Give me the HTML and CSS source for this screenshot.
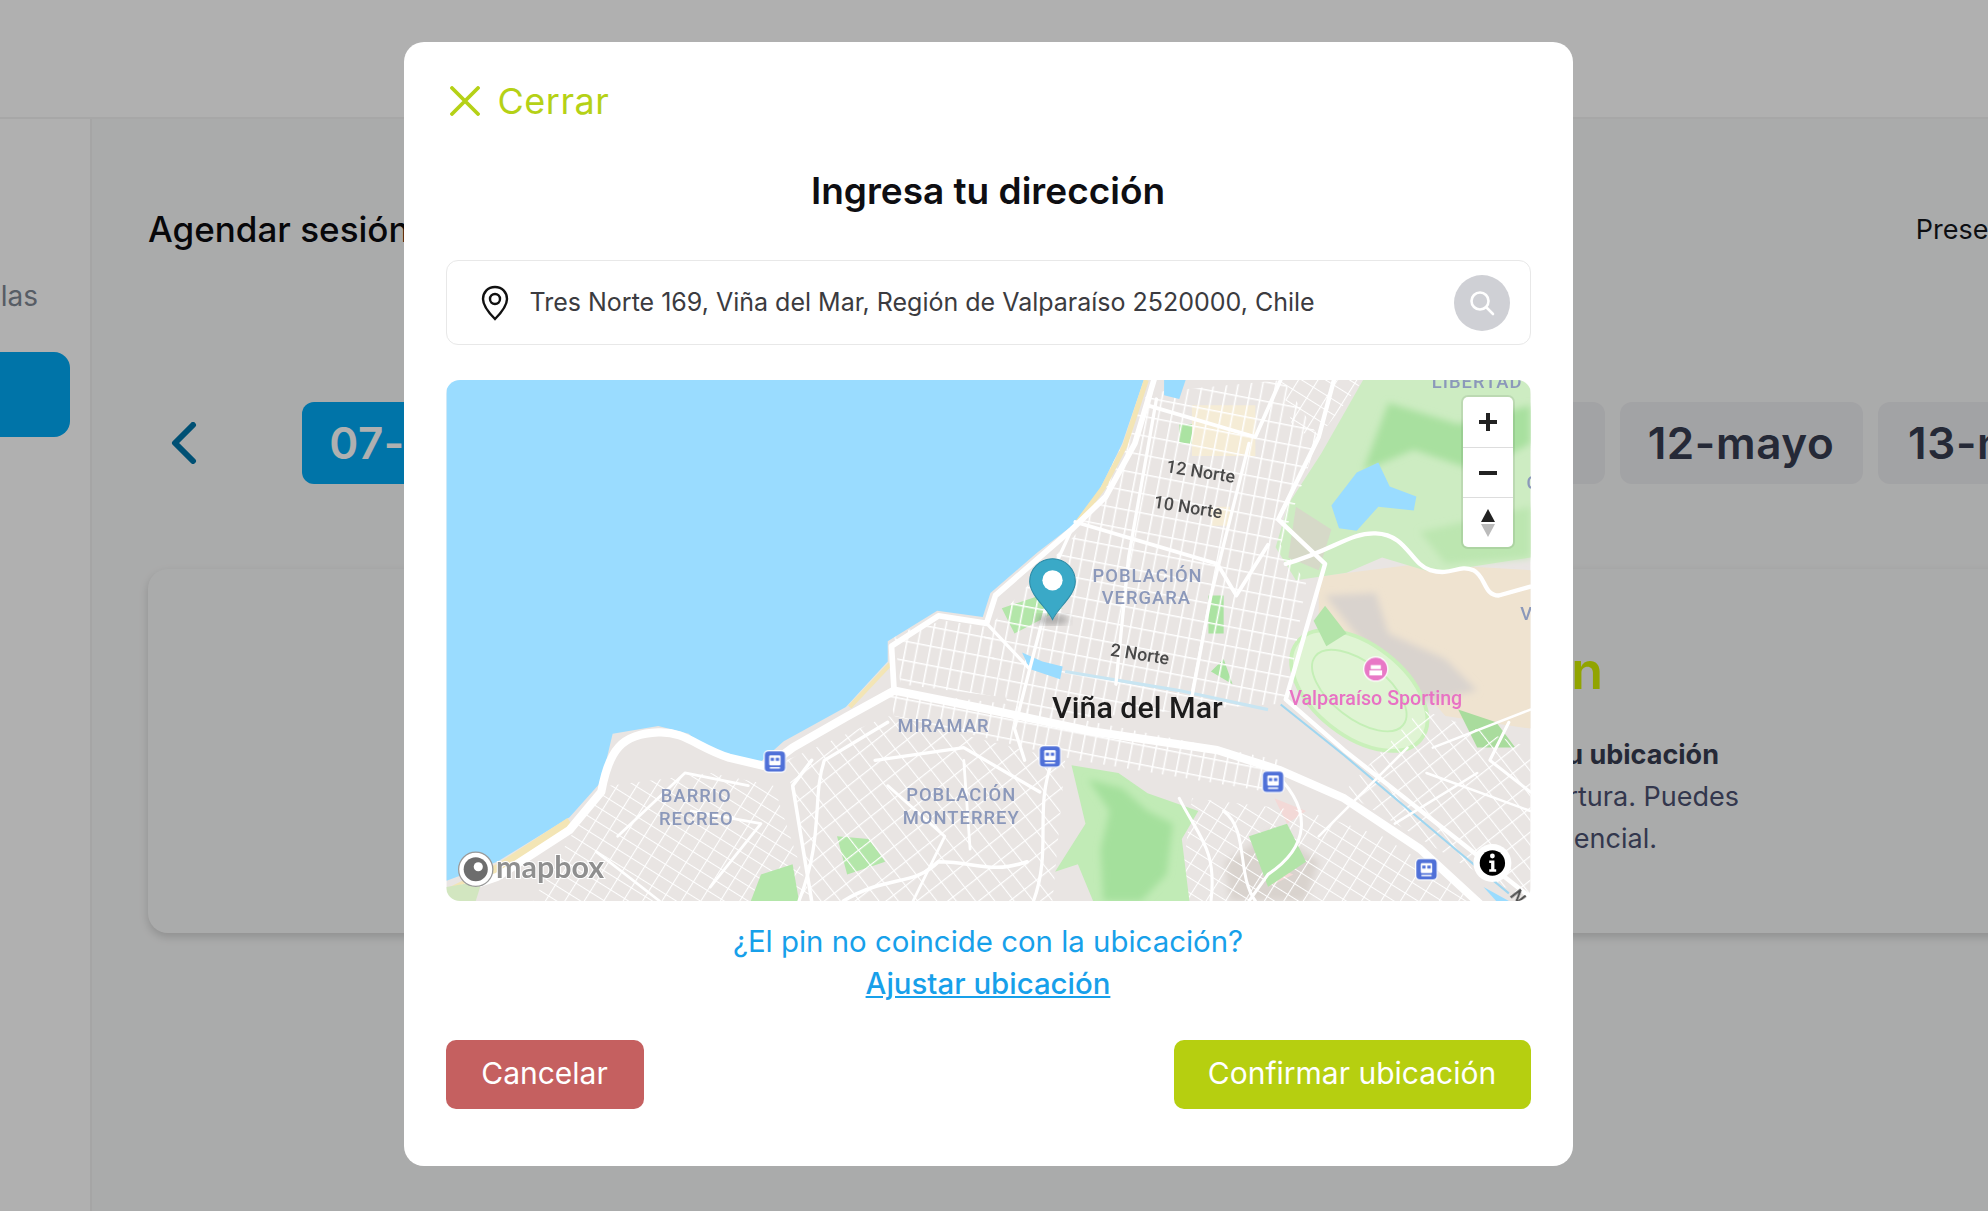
FILE: index.html
```html
<!DOCTYPE html>
<html lang="es">
<head>
	<meta charset="utf-8">
	<title>Agendar sesión</title>
	<link rel="stylesheet" href="styles.css">
</head>
<body>
	<div class="page">
		<header class="topbar"></header>
		<div class="layout">
			<aside class="sidebar">
				<p class="side-label">Salas</p>
				<div class="side-button"></div>
			</aside>
			<main class="content">
				<div class="content-head">
					<h2 class="content-title">Agendar sesión</h2>
					<span class="content-mode">Presencial</span>
				</div>
				<div class="dates">
					<svg class="chevron" viewBox="0 0 26 42" width="26" height="42"><path d="M22 3 L4 21 L22 39" fill="none" stroke="#0075a8" stroke-width="6" stroke-linecap="round" stroke-linejoin="round"/></svg>
					<div class="chip chip-active">07-mayo</div>
					<div class="chip">08-mayo</div>
					<div class="chip">09-mayo</div>
					<div class="chip">10-mayo</div>
					<div class="chip">11-mayo</div>
					<div class="chip chip-short">12-mayo</div>
					<div class="chip">13-mayo</div>
				</div>
				<section class="card">
					<h3 class="card-title">Dirección</h3>
					<p class="card-lead">Confirma tu ubicación</p>
					<p class="card-line1">para la clase de apertura. Puedes</p>
					<p class="card-line2">elegir modalidad presencial.</p>
				</section>
			</main>
		</div>
	</div>

	<div class="overlay">
		<div class="modal">
			<div class="close">
				<svg viewBox="0 0 30 30" width="30" height="30"><path d="M2 2 L28 28 M28 2 L2 28" stroke="#b5d116" stroke-width="3.8" stroke-linecap="round"/></svg>
				<span>Cerrar</span>
			</div>
			<h1 class="modal-title">Ingresa tu dirección</h1>

			<div class="address">
				<svg class="address-pin" viewBox="0 0 30 36" width="30" height="36"><path d="M15 2 C7.5 2 3 7.5 3 14 C3 22 11 30 15 34 C19 30 27 22 27 14 C27 7.5 22.5 2 15 2 Z" fill="none" stroke="#111" stroke-width="2.4"/><circle cx="15" cy="14" r="5" fill="none" stroke="#111" stroke-width="2.4"/></svg>
				<span class="address-text">Tres Norte 169, Viña del Mar, Región de Valparaíso 2520000, Chile</span>
				<div class="address-search">
					<svg viewBox="0 0 28 28" width="28" height="28"><circle cx="12" cy="12" r="8.5" fill="none" stroke="#fff" stroke-width="2.6"/><path d="M18.5 18.5 L25 25" stroke="#fff" stroke-width="2.6" stroke-linecap="round"/></svg>
				</div>
			</div>

			<div class="map">
				<svg class="map-canvas" viewBox="352 300 855 411" width="1085" height="521">
					<defs>
						<pattern id="city" width="19" height="15" patternUnits="userSpaceOnUse" patternTransform="rotate(11)">
							<path d="M0 0 H19 M0 0 V15" stroke="#fff" stroke-width="2.4"/>
							<path d="M9.5 0 V15" stroke="#fff" stroke-width="1.2"/>
						</pattern>
						<pattern id="hills" width="13" height="10" patternUnits="userSpaceOnUse" patternTransform="rotate(32)">
							<path d="M0 0 H13 M0 0 V10" stroke="#fff" stroke-width="1.7"/>
						</pattern>
						<pattern id="hills2" width="12" height="15" patternUnits="userSpaceOnUse" patternTransform="rotate(-38)">
							<path d="M0 0 H12 M0 0 V15" stroke="#fff" stroke-width="1.7"/>
						</pattern>
						<symbol id="transit" viewBox="0 0 18 18">
							<rect x="0.5" y="0.5" width="17" height="17" rx="3.5" fill="#4f70d8" stroke="#fff" stroke-width="1"/>
							<rect x="4.5" y="4" width="9" height="8" rx="1" fill="#fff"/>
							<rect x="5.7" y="6" width="2.6" height="2.4" fill="#4f70d8"/>
							<rect x="9.7" y="6" width="2.6" height="2.4" fill="#4f70d8"/>
							<path d="M5 14 H13" stroke="#fff" stroke-width="1.2"/>
						</symbol>
						<filter id="soft"><feGaussianBlur stdDeviation="0.55"/></filter>
						<filter id="softer"><feGaussianBlur stdDeviation="3"/></filter>
						<filter id="text-soft"><feGaussianBlur stdDeviation="0.25"/></filter>
					</defs>

					<g filter="url(#soft)">
						<rect x="352" y="300" width="855" height="411" fill="#e9e5e3"/>

						<!-- relieve y parques -->
						<path d="M1040 455 L1120 445 L1207 450 V575 L1140 565 L1100 520 L1040 490 Z" fill="#efe3d0"/>
						<path d="M1045 470 L1085 468 L1095 500 L1140 520 L1165 545 L1120 555 L1085 520 Z" fill="#d9d3ce" filter="url(#softer)"/>
						<path d="M1075 300 H1207 V440 L1130 452 L1090 440 L1062 452 L1022 458 L1006 432 L1016 398 L1042 358 Z" fill="#cdecc2"/>
						<path d="M1095 318 L1150 335 L1207 320 V350 L1165 372 L1115 355 L1075 372 Z" fill="#a8e09f" filter="url(#softer)"/>
						<path d="M1120 420 L1207 400 V440 L1140 445 Z" fill="#bce6b0" filter="url(#softer)"/>
						<path d="M1022 400 L1050 418 L1040 450 L1016 440 Z" fill="#d6d9c8"/>
						<ellipse cx="1072" cy="545" rx="62" ry="36" transform="rotate(38 1072 545)" fill="#dff4d3" stroke="#c9f0ba" stroke-width="3"/>
						<ellipse cx="1072" cy="545" rx="44" ry="22" transform="rotate(38 1072 545)" fill="none" stroke="#c4efb6" stroke-width="1.5"/>
						<path d="M1045 478 L1062 500 L1046 510 L1036 490 Z" fill="#b3e4a9"/>
						<path d="M966 680 L1005 655 L1040 680 L1030 711 H970 Z" fill="#d9d3ce" filter="url(#softer)"/>
						<path d="M1150 560 L1180 570 L1195 590 L1165 590 Z" fill="#a9dc9d"/>
						<path d="M660 660 L685 662 L698 680 L668 690 Z" fill="#b3e6a9"/>
						<path d="M820 470 L838 480 L800 500 L790 480 Z" fill="#b3e6a9"/>
						<path d="M930 335 H945 V350 H930 Z M953 470 H965 V500 H953 Z M955 530 L965 520 L972 540 Z" fill="#abe3a2"/>
						<path d="M940 320 H990 V360 H940 Z M955 400 H970 V415 H955 Z" fill="#f5ecd6"/>
						<path d="M995 680 L1020 690 L1000 700 Z M1005 630 L1030 640 L1015 650 Z" fill="#f3d9d7"/>

						<!-- retículas de calles -->
						<path d="M850 420 L905 310 L1012 300 L1040 345 L1010 430 L1030 460 L1015 555 L800 570 L775 500 Z" fill="url(#city)"/>
						<path d="M700 545 L790 555 L1010 600 L1000 625 L850 600 L705 565 Z" fill="url(#city)"/>
						<path d="M705 500 L745 490 L780 495 L790 550 L710 540 Z" fill="url(#city)"/>
						<path d="M450 660 L480 620 L560 610 L610 620 L640 711 H420 Z" fill="url(#hills)"/>
						<path d="M620 600 L700 565 L840 600 L830 711 H640 Z" fill="url(#hills2)"/>
						<path d="M940 630 L1030 640 L1090 660 L1170 711 H930 Z" fill="url(#hills)"/>
						<path d="M1060 625 L1120 560 L1207 590 V711 L1150 680 Z" fill="url(#hills2)"/>
						<path d="M1010 300 L1075 300 L1040 345 L1020 340 Z" fill="url(#hills)"/>

						<!-- parque sur, encima de las calles -->
						<path d="M845 604 L882 610 L905 626 L945 640 L932 662 L938 711 H862 L850 682 L832 688 L856 650 Z" fill="#c1ebb6"/>
						<path d="M858 615 L885 622 L905 640 L925 650 L920 690 L900 711 H870 L868 670 L875 640 Z" fill="#a4e09c" filter="url(#softer)"/>
						<path d="M985 660 L1015 650 L1030 680 L1000 700 Z" fill="#b2e4a8"/>
						<path d="M600 690 L625 682 L630 711 H592 Z" fill="#b3e6a9"/>

						<!-- agua -->
						<path d="M352 300 H902 L885 350 L868 385 L848 413 L818 436 L781 468 L775 487 L739 482 L700 506 L700 522 L667 558 L618 585 L600 601 L558 593 L543 579 L519 573 L483 579 L474 617 L449 645 L392 680 L352 695 Z" fill="#9adcff"/>
						<path d="M1070 373 L1087 365 L1096 384 L1117 392 L1115 403 L1087 400 L1070 419 L1056 417 L1050 399 Z" fill="#9adcff"/>
						<path d="M918 300 L935 300 L930 315 L918 312 Z M806 515 L822 522 L838 526 L836 536 L812 528 Z" fill="#9adcff"/>
						<path d="M1170 700 L1190 711 H1180 Z" fill="#9adcff"/>
						<path d="M840 530 L930 545 L1000 560" fill="none" stroke="#c8e5f2" stroke-width="2.5"/>
						<path d="M1010 556 L1060 596 L1150 672 L1190 705" fill="none" stroke="#9fd6f0" stroke-width="1.6"/>

						<!-- arena -->
						<path d="M904 300 L887 352 L870 385 L850 412" fill="none" stroke="#f3e5b5" stroke-width="4"/>
						<path d="M702 524 L670 558" fill="none" stroke="#f3e5b5" stroke-width="3.5"/>
						<path d="M449 648 L394 684 L355 703" fill="none" stroke="#f3e5b5" stroke-width="6"/>

						<!-- vías principales -->
						<g fill="none" stroke="#fff" stroke-linecap="round" stroke-linejoin="round">
							<path stroke-width="6.5" d="M345 708 L392 692 L449 655 L474 625 C480 592 490 579 519 578 C540 577 550 590 575 598 L605 605 L625 590 L667 566 L705 545 L780 560 L860 577 L960 592 L1010 608 L1060 630 L1120 670 L1170 716"/>
							<path stroke-width="4.5" d="M705 545 L703 510 L740 486 L778 492 L785 470 L845 418 L872 392 L895 350 L910 300"/>
							<path stroke-width="3.5" d="M1052 300 L1040 345 L1008 410 L1045 445 L1014 552 L1060 592 L1207 708"/>
							<path stroke-width="3.4" d="M1014 445 C1050 435 1065 420 1085 421 C1110 422 1112 445 1128 450 C1145 455 1150 445 1162 450 C1172 455 1170 470 1182 470 L1207 463"/>
							<path stroke-width="2.6" d="M778 492 L812 528 L800 575 L808 600 M845 418 L835 440 L812 528"/>
							<path stroke-width="3" d="M848 412 L960 445 L975 470 L1000 430 M905 320 L990 345 L1010 300"/>
							<path stroke-width="2.6" d="M912 315 L890 440 L880 540 M985 350 L955 470 L940 550"/>
							<path stroke-width="2.4" d="M1000 605 C1040 640 1030 670 1000 690 L985 711 M930 630 C945 660 960 670 955 711 M965 640 C985 655 975 690 990 711"/>
							<path stroke-width="2.6" d="M830 600 C815 640 830 670 815 711 M700 570 L650 600 C640 630 650 660 630 711 M690 600 L760 590 L820 625"/>
							<path stroke-width="2.8" d="M640 600 L625 620 L640 711 M665 711 C700 690 720 700 740 680 C770 680 780 690 810 680"/>
							<path stroke-width="2.2" d="M487 660 L540 610 L590 620 M470 672 L520 711 M545 640 L600 650 L560 700 M760 600 L765 670 M700 620 L745 660 L720 711"/>
							<path stroke-width="2" d="M1130 590 L1207 560 M1125 610 L1207 640 M1100 650 L1165 610 M1040 660 L1110 590"/>
							<path stroke-width="2.4" d="M1190 570 L1175 600 L1207 625"/>
						</g>
						<path d="M352 700 L380 695 L375 711 H352 Z" fill="#d2e6c0"/>
					</g>

					<!-- rótulos -->
					<g filter="url(#text-soft)">
						<g class="map-area">
							<text x="1165" y="306" text-anchor="middle">LIBERTAD</text>
							<text x="905" y="459" text-anchor="middle">POBLACIÓN</text>
							<text x="904" y="477" text-anchor="middle">VERGARA</text>
							<text x="744" y="578" text-anchor="middle">MIRAMAR</text>
							<text x="549" y="633" text-anchor="middle">BARRIO</text>
							<text x="549" y="651" text-anchor="middle">RECREO</text>
							<text x="758" y="632" text-anchor="middle">POBLACIÓN</text>
							<text x="758" y="650" text-anchor="middle">MONTERREY</text>
							<text x="1199" y="489">V</text>
							<text x="1204" y="386">C</text>
						</g>
						<g class="map-street">
							<text x="947" y="377" text-anchor="middle" transform="rotate(9 947 372)">12 Norte</text>
							<text x="937" y="405" text-anchor="middle" transform="rotate(9 937 400)">10 Norte</text>
							<text x="899" y="521" text-anchor="middle" transform="rotate(9 899 516)">2 Norte</text>
							<text x="1190" y="707" transform="rotate(52 1190 707)">Norte</text>
						</g>
						<text class="map-city" x="897" y="567" text-anchor="middle">Viña del Mar</text>
						<text class="map-poi" x="1085" y="556" text-anchor="middle">Valparaíso Sporting</text>
					</g>
					<circle cx="1085" cy="528" r="9.5" fill="#e878c6" stroke="#fff" stroke-width="1"/>
					<path d="M1080 529 H1090 V533 H1080 Z M1081 525 H1089 V528 H1081 Z" fill="#fff"/>

					<use href="#transit" x="602" y="592" width="18" height="18"/>
					<use href="#transit" x="819" y="588" width="18" height="18"/>
					<use href="#transit" x="995" y="608" width="18" height="18"/>
					<use href="#transit" x="1116" y="677" width="18" height="18"/>

					<!-- pin -->
					<ellipse cx="830" cy="489" rx="13" ry="4" fill="#777" opacity="0.55" filter="url(#softer)"/>
					<path d="M830 489 C826 480 812 470 812 459 C812 449 820 441 830 441 C840 441 848 449 848 459 C848 470 834 480 830 489 Z" fill="#3aa9c7" stroke="#2d8ba6" stroke-width="0.8"/>
					<circle cx="830" cy="458" r="8" fill="#fff"/>

					<!-- logo e info -->
					<circle cx="375" cy="686" r="13.5" fill="#fff" stroke="#999" stroke-width="1"/>
					<circle cx="375" cy="686" r="9.5" fill="#6d6d6d"/>
					<circle cx="377" cy="684" r="3.6" fill="#fff"/>
					<text class="map-logo" x="391" y="693">mapbox</text>
					<circle cx="1177" cy="681" r="15" fill="#fff"/>
					<circle cx="1177" cy="681" r="10" fill="#000"/>
					<circle cx="1177" cy="675.5" r="1.9" fill="#fff"/>
					<path d="M1174.5 679 H1178.6 V686 H1180 V688 H1174.5 V686 H1176 V681 H1174.5 Z" fill="#fff"/>
				</svg>

				<div class="map-controls">
					<div class="map-btn"><svg viewBox="0 0 22 22" width="22" height="22"><path d="M11 2 V20 M2 11 H20" stroke="#222" stroke-width="4"/></svg></div>
					<div class="map-btn"><svg viewBox="0 0 22 22" width="22" height="22"><path d="M2 11 H20" stroke="#222" stroke-width="4"/></svg></div>
					<div class="map-btn"><svg viewBox="0 0 16 32" width="16" height="32"><path d="M8 2 L15 15 H1 Z" fill="#222"/><path d="M8 30 L15 17 H1 Z" fill="#bbb"/></svg></div>
				</div>
			</div>

			<div class="pin-help">
				<p>¿El pin no coincide con la ubicación?</p>
				<a class="pin-link" href="#">Ajustar ubicación</a>
			</div>

			<div class="actions">
				<button class="btn btn-cancel">Cancelar</button>
				<button class="btn btn-confirm">Confirmar ubicación</button>
			</div>
		</div>
	</div>
</body>
</html>
```

FILE: styles.css
```css
* {
	margin: 0;
	padding: 0;
	box-sizing: border-box;
}

html, body {
	height: 100%;
	overflow: hidden;
}

body {
	font-family: "Inter", "Open Sans", sans-serif;
	background: #fff;
}

.page {
	height: 1211px;
	width: 1988px;
	overflow: hidden;
	background: #fff;
}

.topbar {
	height: 119px;
	border-bottom: 2px solid #f2f2f2;
}

.layout {
	display: flex;
	height: 1092px;
}

.sidebar {
	width: 92px;
	flex: none;
	display: flex;
	flex-direction: column;
	align-items: flex-end;
	border-right: 2px solid #f0f0f0;
	padding-top: 159px;
	overflow: hidden;
}

.side-label {
	font-size: 28px;
	line-height: 36px;
	color: #7f8793;
	margin-right: 52px;
	white-space: nowrap;
}

.side-button {
	width: 150px;
	height: 85px;
	flex: none;
	margin-top: 38px;
	margin-right: 20px;
	background: #00a9f3;
	border-radius: 16px;
}

.content {
	flex: 1;
	background: #f7f8f8;
	padding: 86px 0 0 56px;
	min-width: 0;
	overflow: hidden;
}

.content-head {
	display: flex;
	justify-content: space-between;
	align-items: center;
	height: 48px;
	width: 1900px;
}

.content-title {
	font-size: 35px;
	font-weight: 500;
	color: #0b0b0f;
}

.content-mode {
	font-size: 27px;
	color: #14161c;
}

.dates {
	display: flex;
	align-items: center;
	gap: 15px;
	margin-top: 149px;
	width: 2100px;
}

.chevron {
	flex: none;
	margin: 0 90px 0 23px;
}

.chip {
	width: 248.5px;
	height: 82px;
	flex: none;
	display: flex;
	align-items: center;
	justify-content: center;
	border-radius: 12px;
	background: #ebecef;
	font-size: 44px;
	font-weight: 600;
	letter-spacing: 0.6px;
	color: #363c50;
}

.chip-active {
	background: #00a9f3;
	color: #fff;
}

.chip-short {
	width: 243px;
}

.card {
	width: 1900px;
	height: 364px;
	margin-top: 85px;
	padding-top: 68px;
	padding-right: 309px;
	border-radius: 20px;
	background: #f7f8f8;
	box-shadow: 0 4px 10px rgba(0, 0, 0, 0.16);
	display: flex;
	flex-direction: column;
	align-items: flex-end;
	white-space: nowrap;
}

.card-title {
	font-size: 52px;
	font-weight: 600;
	line-height: 68px;
	color: #d2ee00;
	margin-right: 136px;
	margin-bottom: 29px;
}

.card-lead {
	font-size: 27px;
	font-weight: 700;
	line-height: 42px;
	color: #363c50;
	margin-right: 20px;
}

.card-line1, .card-line2 {
	font-size: 27px;
	line-height: 42px;
	color: #4a5070;
}

.card-line2 {
	margin-right: 82px;
}

.overlay {
	position: fixed;
	left: 0;
	top: 0;
	width: 100%;
	height: 100%;
	background: rgba(0, 0, 0, 0.31);
	display: flex;
	justify-content: center;
	padding: 42px 12px 0 0;
}

.modal {
	width: 1169px;
	height: 1124px;
	background: #fff;
	border-radius: 20px;
	padding: 42px;
	display: flex;
	flex-direction: column;
}

.close {
	display: flex;
	align-items: center;
	gap: 18px;
	height: 34px;
	margin-left: 4px;
	color: #b5d116;
	font-size: 36px;
	letter-spacing: 0.5px;
}

.modal-title {
	margin-top: 49px;
	text-align: center;
	font-size: 37px;
	font-weight: 600;
	line-height: 48px;
	color: #0e0e12;
}

.address {
	display: flex;
	align-items: center;
	height: 85px;
	margin-top: 45px;
	padding: 0 20px 0 33px;
	border: 1px solid #e8e8e8;
	border-radius: 12px;
}

.address-pin {
	flex: none;
}

.address-text {
	flex: 1;
	margin-left: 20px;
	margin-bottom: 2px;
	font-size: 25px;
	color: #3b3b40;
	white-space: nowrap;
}

.address-search {
	width: 56px;
	height: 56px;
	flex: none;
	display: flex;
	align-items: center;
	justify-content: center;
	border-radius: 50%;
	background: #cfd0d5;
}

.map {
	position: relative;
	width: 1085px;
	height: 521px;
	margin-top: 35px;
	border-radius: 14px;
	overflow: hidden;
	flex: none;
}

.map-canvas {
	display: block;
}

.map-area text {
	font-family: "Roboto", sans-serif;
	font-size: 14.5px;
	font-weight: 500;
	letter-spacing: 0.8px;
	fill: #8b98ba;
}

.map-street text {
	font-family: "Roboto", sans-serif;
	font-size: 14px;
	font-weight: 500;
	fill: #4a4a4a;
}

.map-city {
	font-family: "Roboto", sans-serif;
	font-size: 24px;
	font-weight: 500;
	fill: #1a1a1a;
}

.map-poi {
	font-family: "Roboto", sans-serif;
	font-size: 15.5px;
	font-weight: 500;
	fill: #e872c4;
}

.map-logo {
	font-family: "Lato", sans-serif;
	font-size: 24px;
	font-weight: 700;
	fill: #8f8f8f;
	stroke: #fff;
	stroke-width: 1.6px;
	paint-order: stroke;
}

.map-controls {
	position: absolute;
	top: 17px;
	right: 18px;
	width: 50px;
	background: #fff;
	border-radius: 5px;
	box-shadow: 0 0 0 2px rgba(0, 0, 0, 0.08);
}

.map-btn {
	height: 50px;
	display: flex;
	align-items: center;
	justify-content: center;
	border-top: 1px solid #ddd;
}

.map-btn:first-child {
	border-top: none;
}

.pin-help {
	margin-top: 20px;
	text-align: center;
	font-size: 29.4px;
	line-height: 42px;
	color: #17a0ea;
}

.pin-link {
	color: #17a0ea;
	font-weight: 500;
}

.actions {
	display: flex;
	justify-content: space-between;
	margin-top: 35px;
}

.btn {
	height: 69px;
	border: none;
	border-radius: 10px;
	color: #fff;
	font-family: "Inter", "Open Sans", sans-serif;
	font-size: 30px;
	padding-bottom: 3px;
}

.btn-cancel {
	width: 198px;
	background: #c56060;
}

.btn-confirm {
	width: 357px;
	background: #b6cf10;
}
```
